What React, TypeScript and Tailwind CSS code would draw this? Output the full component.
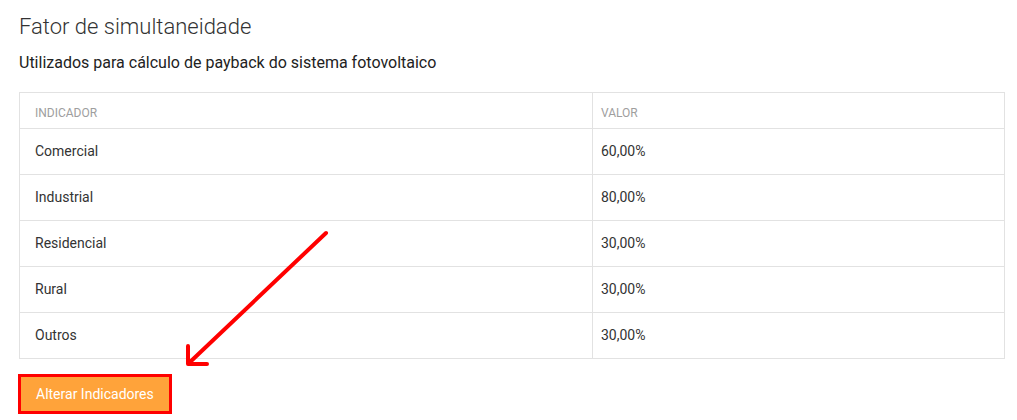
import React from "react";

const rows = [
  ["Comercial", "60,00%"],
  ["Industrial", "80,00%"],
  ["Residencial", "30,00%"],
  ["Rural", "30,00%"],
  ["Outros", "30,00%"],
];

export default function App() {
  return (
    <div
      className="relative w-[1017px] h-[420px] bg-white overflow-hidden text-[#333]"
      style={{ fontFamily: "Roboto, 'Noto Sans', sans-serif" }}
    >
      <div className="pl-[19px] pr-[12px] pt-[14px]">
        <h1 className="text-[22px] leading-[26px] font-light text-[#333]">Fator de simultaneidade</h1>
        <p className="mt-[13px] text-[16px] leading-[20px] text-[#222]">
          Utilizados para cálculo de payback do sistema fotovoltaico
        </p>
        <div className="mt-[19px] border border-[#e2e2e2]">
          <div className="grid grid-cols-[573px_1fr] border-b border-[#e2e2e2]">
            <div className="pl-[15px] pt-[11px] pb-[6px] text-[12px] leading-[18px] text-[#9e9e9e] border-r border-[#e2e2e2]">
              INDICADOR
            </div>
            <div className="pl-[8px] pt-[11px] pb-[6px] text-[12px] leading-[18px] text-[#9e9e9e]">VALOR</div>
          </div>
          {rows.map(([k, v], i) => (
            <div
              key={k}
              className={
                i < rows.length - 1
                  ? "grid grid-cols-[573px_1fr] h-[46px] border-b border-[#e2e2e2]"
                  : "grid grid-cols-[573px_1fr] h-[45px]"
              }
            >
              <div className="pl-[15px] flex items-center text-[14px] text-[#333] border-r border-[#e2e2e2]">{k}</div>
              <div className="pl-[8px] flex items-center text-[14px] text-[#333]">{v}</div>
            </div>
          ))}
        </div>
        <button className="mt-[15px] ml-[-1px] h-[40px] w-[154px] border-[3px] border-[#ff0000] bg-[#ffa33a] text-white text-[14px] text-left pl-[15px]">
          Alterar Indicadores
        </button>
      </div>
      <svg
        className="absolute left-0 top-0 pointer-events-none"
        width="1017"
        height="420"
        viewBox="0 0 1017 420"
      >
        <g stroke="#ff0000" strokeWidth="4" strokeLinecap="round" strokeLinejoin="round" fill="none">
          <line x1="326" y1="233" x2="189" y2="363" />
          <polyline points="188,346 188,364 207,364" />
        </g>
      </svg>
    </div>
  );
}
